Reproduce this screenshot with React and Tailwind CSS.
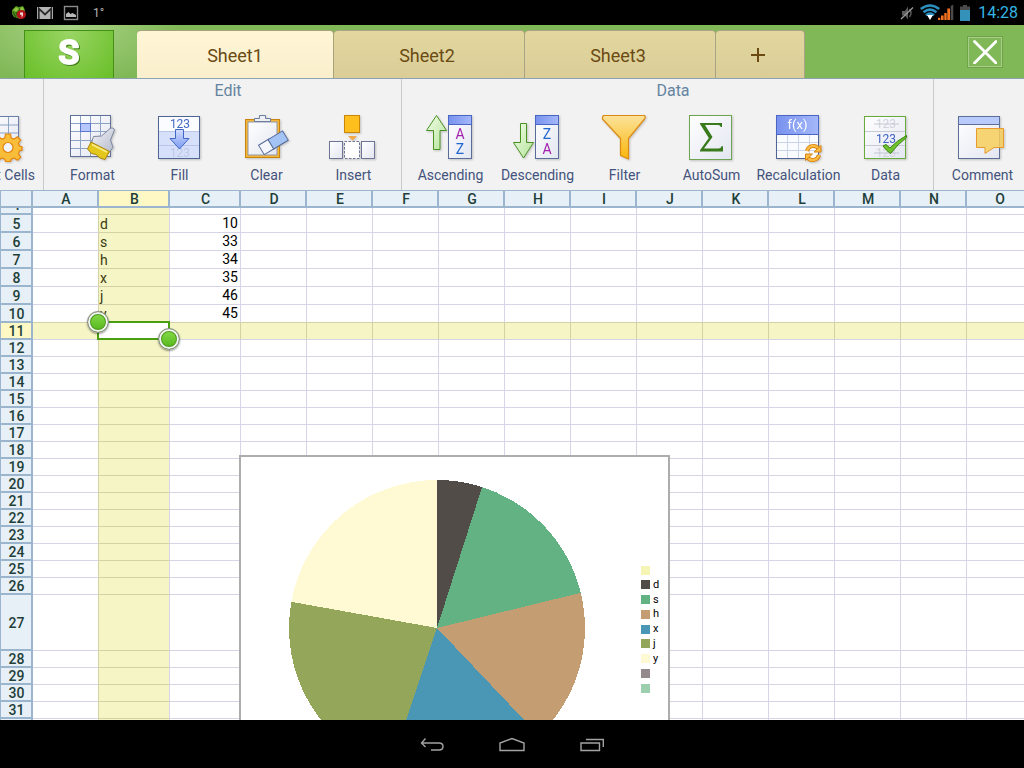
import React from "react";

/* ---------- Status bar ---------- */

function StatusBar() {
  return (
    <header className="flex h-[25px] shrink-0 items-center justify-between bg-black pr-1.5 pl-[11px]">
      <div className="flex items-center">
        <svg className="mr-2.5 h-4 w-4" viewBox="0 0 16 16" aria-hidden="true">
          <path d="M1 5 L5 1 L8 2 L12 1 L14 5 L13 10 L9 14 L3 12 L1 9Z" fill="#4d8c1c" />
          <path d="M2 5l3-3 3 2-3 3zM8 3l4-1 1 3-4 1z" fill="#8fc63f" />
          <path d="M2 7l3 5M5 7l2 5M9 3l-3 8" stroke="#24500b" strokeWidth="1" />
          <circle cx="10.3" cy="9.5" r="4.6" fill="#b5161b" />
          <path d="M9 7.4h3v3l-1.4 2.4v-3H9z" fill="#f1dada" />
        </svg>
        <svg className="mr-2.5 h-4 w-4" viewBox="0 0 16 16" aria-hidden="true">
          <rect x="0" y="2" width="16" height="12" fill="#b4b4b4" />
          <path d="M1.800 14V3.500l6.200 6 6.200-6V14" fill="none" stroke="#2b2b2b" strokeWidth="1.800" />
        </svg>
        <svg className="mr-3.5 h-4 w-4" viewBox="0 0 16 16" aria-hidden="true">
          <rect x="1.500" y="1.500" width="13" height="13" fill="none" stroke="#8c8c8c" strokeWidth="1.400" />
          <path d="M3 12V9l2.500-2 2 2 2-1 3.500 2v2z" fill="#b8b8b8" />
        </svg>
        <span className="text-xs text-[#b4b4b4]">1°</span>
      </div>
      <div className="flex items-center">
        <svg className="mr-1.5 h-4 w-[14px]" viewBox="0 0 14 16" aria-hidden="true">
          <path d="M2 6h3l3-4.500v13L5 10.500H2z" fill="#5c5c5c" />
          <path d="M9.500 4q3 4 0 8" fill="none" stroke="#5c5c5c" strokeWidth="1.400" />
          <path d="M1 14L13 2.500" stroke="#9a9a9a" strokeWidth="1.300" />
        </svg>
        <svg className="mr-1.5 h-[17px] w-[34px]" viewBox="0 0 34 17" aria-hidden="true">
          <g fill="none" stroke="#2b8fc0" strokeWidth="2.600">
            <path d="M0.800 5Q10-2 19.200 5" />
            <path d="M3.500 8.300Q10 3 16.500 8.300" />
            <path d="M6 11.300Q10 7.800 14 11.300" />
          </g>
          <path d="M7 11h6L10 16z" fill="#fff" />
          <path d="M18 16v-2.200h2.300V16zM21 16v-4.500h2.600V16zM24.300 16V9h2.400v7zM27.300 16V4.500h2.700V16z" fill="#f47321" />
          <path d="M30.700 16V2l2.600-1.500V16z" fill="#4a4a4a" />
        </svg>
        <svg className="mr-2 h-4 w-2.5" viewBox="0 0 10 16" aria-hidden="true">
          <path d="M3 0h4v1.500h3V6H0V1.500h3z" fill="#4a4a4a" />
          <rect y="5" width="10" height="11" fill="#3492ba" />
        </svg>
        <time className="text-base leading-6 text-[#33b5e5]">14:28</time>
      </div>
    </header>
  );
}

/* ---------- Sheet tabs ---------- */

function SheetTab({ label, active }) {
  return (
    <button
      type="button"
      role="tab"
      aria-selected={active}
      className={
        active
          ? "w-[197px] rounded-t-sm border-t border-r border-[#a9a27a] bg-linear-to-b from-[#fff6d6] to-[#f9efcd] pt-0.5 text-lg text-[#6b4a14]"
          : "w-[191px] rounded-t-sm border-t border-r border-[#aba385] bg-linear-to-b from-[#e3d79f] to-[#dacd98] pt-0.5 pr-1 text-lg text-[#6b4a14]"
      }
    >
      {label}
    </button>
  );
}

function TabBar() {
  return (
    <div className="flex h-[54px] shrink-0 items-end border-b border-[#8ba3b3] bg-[#81b857] bg-[radial-gradient(ellipse_110px_60px_at_70px_0px,#a9d385,transparent)] pt-[5px]">
      <button
        type="button"
        aria-label="Menu"
        className="ml-6 flex h-full w-[90px] items-center justify-center border border-b-0 border-[#46901a] bg-[radial-gradient(ellipse_at_top,#9ad565,#69bf28)]"
      >
        <svg className="mb-1.5 h-8 w-8 overflow-visible drop-shadow-[1px_1px_0_#3f7d17]" viewBox="0 0 32 32">
          <text
            x="16"
            y="28"
            textAnchor="middle"
            fontSize="34"
            fontWeight="600"
            fill="#fff"
            stroke="#fff"
            strokeWidth="2"
            strokeLinejoin="round"
          >
            S
          </text>
        </svg>
      </button>
      <div role="tablist" className="ml-[23px] flex h-full">
        <SheetTab label="Sheet1" active />
        <SheetTab label="Sheet2" active={false} />
        <SheetTab label="Sheet3" active={false} />
        <button
          type="button"
          aria-label="Add sheet"
          className="flex w-[89px] items-center justify-center rounded-t-sm border-t border-r border-[#aba385] bg-linear-to-b from-[#e3d79f] to-[#dacd98]"
        >
          <svg className="mr-1 h-4 w-4" viewBox="0 0 16 16" aria-hidden="true">
            <path d="M8 1v14M1 8h14" stroke="#6b4a14" strokeWidth="2" />
          </svg>
        </button>
      </div>
      <button
        type="button"
        aria-label="Close"
        className="mr-[22px] mb-[11px] ml-auto flex h-[30px] w-[34px] items-center justify-center border border-[#a9ce8b] shadow-[0_0_0_1px_#6fa348]"
      >
        <svg className="h-6 w-6" viewBox="0 0 24 24" aria-hidden="true">
          <path d="M1.500 1.500l21.500 21.500M23 1.500L1.500 23" stroke="#fff" strokeWidth="2.800" strokeLinecap="round" />
        </svg>
      </button>
    </div>
  );
}

/* ---------- Ribbon icons (47 x 48 artboard) ---------- */

function Defs() {
  return (
    <svg className="absolute h-0 w-0" aria-hidden="true">
      <defs>
        <linearGradient id="paper" x1="0" y1="0" x2="1" y2="1">
          <stop offset="0" stopColor="#ffffff" />
          <stop offset="1" stopColor="#e3e6f1" />
        </linearGradient>
        <linearGradient id="blue" x1="0" y1="0" x2="1" y2="0">
          <stop offset="0" stopColor="#7892ee" />
          <stop offset="1" stopColor="#a5b8fa" />
        </linearGradient>
        <linearGradient id="gold" x1="0" y1="0" x2="0" y2="1">
          <stop offset="0" stopColor="#fbe29a" />
          <stop offset="1" stopColor="#fbb70c" />
        </linearGradient>
        <linearGradient id="leaf" x1="0" y1="0" x2="1" y2="1">
          <stop offset="0" stopColor="#f2fde8" />
          <stop offset="1" stopColor="#b4e39a" />
        </linearGradient>
        <linearGradient id="arrow" x1="0" y1="0" x2="0" y2="1">
          <stop offset="0" stopColor="#d3deff" />
          <stop offset="1" stopColor="#7b9bf0" />
        </linearGradient>
        <linearGradient id="steel" x1="0" y1="0" x2="1" y2="1">
          <stop offset="0" stopColor="#f4f5fa" />
          <stop offset="1" stopColor="#b3b9c9" />
        </linearGradient>
      </defs>
    </svg>
  );
}

const iconArt = {
  cells: (
    <>
      <rect x="5.500" y="3.500" width="41" height="41" fill="url(#paper)" stroke="#6a7fa8" />
      <path d="M16.500 4v40M26.500 4v40M36.500 4v40M6 12h40M6 20h40M6 28h40M6 36h40" stroke="#8da3c4" />
      <g fill="#f9bd3a" stroke="#e3850f" strokeWidth="1.200">
        <path d="M33.500 21h5l.8 4 2.700 1.100 3.500-2.300 3.200 3.300-2.300 3.400 1.100 2.600 2.500.6v3.600l-2.500.7-1.100 2.600 2.300 3.500-3.200 3.200-3.500-2.300-2.700 1.100-.8 2.400h-5l-.8-2.400-2.700-1.100-3.500 2.300-3.200-3.200 2.300-3.500-1.100-2.600-2.500-.7v-3.600l2.500-.6 1.100-2.600-2.300-3.400 3.200-3.300 3.500 2.300 2.700-1.100z" />
        <circle cx="36" cy="34.500" r="5" fill="#f1f4fa" />
      </g>
    </>
  ),
  format: (
    <>
      <rect x="1.500" y="2.500" width="40" height="41" fill="url(#paper)" stroke="#5f7099" />
      <path d="M11.500 3v40M21.500 3v40M31.500 3v40M2 10.500h39M2 18.500h39M2 27.500h39M2 35.500h39" stroke="#8da3c4" />
      <rect x="11.500" y="10.500" width="10" height="8" fill="#b6c8fb" stroke="#5c77d0" />
      <path d="M41 15.500q3.500-1.500 4.500 1.500L41.500 27l2.500 7.500-4 5L22.500 29.500l2-6 8-.5z" fill="url(#steel)" stroke="#7b859f" strokeLinejoin="round" />
      <path d="M22 29l18.500 9.500-4.500 8-5-1.500-4-3.500-4.500-1-4-4.500z" fill="#e3c71c" stroke="#a98309" strokeLinejoin="round" />
      <path d="M23 31.500l15 7.500" stroke="#f8ec87" strokeWidth="1.800" />
    </>
  ),
  fill: (
    <>
      <rect x="2.500" y="3.500" width="41" height="42" fill="#d6e0fa" stroke="#4f6595" />
      <rect x="3" y="4" width="40" height="14" fill="#fbfcff" />
      <path d="M3 18.500h40M3 32.500h40" stroke="#b9c6ea" />
      <text x="24" y="15" textAnchor="middle" fontSize="12" fill="#4468c4">123</text>
      <text x="24" y="44" textAnchor="middle" fontSize="12" fill="#bdc9e6">123</text>
      <path d="M19.500 16.500h8v9H33L23.500 36 14 25.500h5.500z" fill="url(#arrow)" stroke="#4267c6" />
    </>
  ),
  clear: (
    <>
      <rect x="2.500" y="6.500" width="34" height="38" fill="#f5b538" stroke="#c8840e" />
      <rect x="5" y="9" width="29" height="33" fill="url(#paper)" stroke="#9199ac" />
      <path d="M11.500 8.500v-3h5v-3h6v3h5v3z" fill="#eef0f6" stroke="#6d7d9e" />
      <g transform="rotate(-31 30 30)" stroke="#566c99">
        <rect x="16.500" y="24.500" width="12" height="11" fill="#f5f7fd" />
        <rect x="27.500" y="24.500" width="17" height="11" fill="#a4c3f5" />
      </g>
    </>
  ),
  insert: (
    <>
      <rect x="14.500" y="2.500" width="15" height="17" fill="#fcbf1e" stroke="#cd8708" />
      <path d="M18 23h9l-4.500 4.500z" fill="#f3a94b" />
      <rect x="-0.500" y="28.500" width="13" height="17" fill="url(#paper)" stroke="#6d7697" />
      <rect x="14.500" y="28.500" width="15" height="17" fill="#fff" stroke="#6d7697" strokeDasharray="2.500 1.500" />
      <rect x="31.500" y="28.500" width="13" height="17" fill="url(#paper)" stroke="#6d7697" />
    </>
  ),
  ascending: (
    <>
      <path d="M9.500 2.500l10 15h-6.500v19H6.500v-19H-.5z" fill="url(#leaf)" stroke="#4b9224" />
      <rect x="21.500" y="2.500" width="23" height="43" fill="url(#paper)" stroke="#596c9a" />
      <rect x="21.500" y="2.500" width="23" height="9" fill="url(#blue)" stroke="#4a66c4" />
      <text x="33" y="26" textAnchor="middle" fontSize="14" fill="#a31fae">A</text>
      <text x="33" y="41" textAnchor="middle" fontSize="14" fill="#2066cf">Z</text>
    </>
  ),
  descending: (
    <>
      <path d="M6.500 10.500h6v19h7L9.500 45l-10-15.500h7z" fill="url(#leaf)" stroke="#4b9224" />
      <rect x="21.500" y="2.500" width="23" height="43" fill="url(#paper)" stroke="#596c9a" />
      <rect x="21.500" y="2.500" width="23" height="9" fill="url(#blue)" stroke="#4a66c4" />
      <text x="33" y="26" textAnchor="middle" fontSize="14" fill="#2066cf">Z</text>
      <text x="33" y="41" textAnchor="middle" fontSize="14" fill="#a31fae">A</text>
    </>
  ),
  filter: (
    <path
      d="M2.500 2.500h41q1.500 1.500 0 3.500L27.500 25.500V46l-8-3.500v-17L1.500 6q-.5-2 1-3.500z"
      fill="url(#gold)"
      stroke="#dc8b14"
      strokeWidth="1.200"
      strokeLinejoin="round"
    />
  ),
  autosum: (
    <>
      <rect x="1.500" y="2.500" width="42" height="44" fill="url(#paper)" stroke="#6fa552" />
      <path
        d="M12 10h22v4h-1.200q-.5-2-2.800-2H17l7.500 12-8.500 11.500h14.500q2.500 0 3-2.300H35V38.500H12v-1.200L20.800 25 12 11z"
        fill="#397a1c"
      />
    </>
  ),
  recalculation: (
    <>
      <rect x="1.500" y="2.500" width="42" height="43" fill="#fafbff" stroke="#4f6595" />
      <path d="M12.500 22v23M23.500 22v23M34.500 22v23M2 29.500h41M2 37.500h41" stroke="#cbd5ea" />
      <rect x="1.500" y="2.500" width="42" height="19" fill="url(#blue)" stroke="#4a66c4" />
      <text x="22.500" y="16" textAnchor="middle" fontSize="13" fill="#fff">f(x)</text>
      <g fill="none" strokeLinecap="butt">
        <path d="M32 38a6.500 6.500 0 0 1 11.500-2.500M44 42a6.500 6.500 0 0 1-11.500 2.500" stroke="#d9820d" strokeWidth="4" />
        <path d="M32 38a6.500 6.500 0 0 1 11.500-2.500M44 42a6.500 6.500 0 0 1-11.500 2.500" stroke="#fbbd45" strokeWidth="2.200" />
      </g>
      <path d="M46 32.500v6.500h-7zM30.500 47.500V41h7z" fill="#fbbd45" stroke="#d9820d" />
    </>
  ),
  data: (
    <>
      <rect x="2.500" y="3.500" width="41" height="42" fill="url(#paper)" stroke="#68ab3b" />
      <path d="M3 18.500h40M3 32.500h40" stroke="#c7cbd6" />
      <text x="24" y="15" textAnchor="middle" fontSize="12" fill="#d0d3dc">123</text>
      <text x="24" y="30" textAnchor="middle" fontSize="12" fill="#3f62c4">123</text>
      <text x="24" y="44" textAnchor="middle" fontSize="12" fill="#d0d3dc">123</text>
      <path d="M12 11h25M12 40h25" stroke="#c3c7d3" />
      <path d="M21 33l3-1.500 4 3.500q7-7.500 16.500-12.500v2Q36 31 28.500 40.500q-4-2.500-7.500-7.500z" fill="#6fc22f" stroke="#37800f" />
    </>
  ),
  comment: (
    <>
      <rect x="-0.500" y="3.500" width="41" height="42" fill="url(#paper)" stroke="#5d6f99" />
      <rect x="-0.500" y="3.500" width="41" height="8" fill="#b9cafc" stroke="#5d6f99" />
      <path d="M17.500 15.500h27v19H35L26 40.500v-6h-8.500z" fill="#f8cf5c" fillOpacity="0.850" stroke="#e79b2c" />
    </>
  ),
};

function Tool({ icon, label }) {
  return (
    <button type="button" className="flex w-[87px] shrink-0 flex-col items-center gap-1 text-sm leading-5 whitespace-nowrap text-[#44537d]">
      <svg className="h-12 w-[47px] overflow-visible drop-shadow-[1px_1px_1px_#0003]" viewBox="0 0 47 48" aria-hidden="true">
        {iconArt[icon]}
      </svg>
      {label}
    </button>
  );
}

function Group({ title, tools }) {
  return (
    <section className="shrink-0 border-l border-[#c6caca] pr-1 pl-[5px]">
      <h2 className="h-[34px] pl-2.5 text-center text-base leading-6 text-[#6484a0]">{title}</h2>
      <div className="flex">
        {tools.map(([icon, label]) => (
          <Tool key={icon} icon={icon} label={label} />
        ))}
      </div>
    </section>
  );
}

function Ribbon() {
  return (
    <div className="flex h-[111px] shrink-0 overflow-hidden bg-[#f2f2f2]">
      <div className="flex w-[43px] shrink-0 justify-end overflow-hidden pt-[34px] pr-1">
        <Tool icon="cells" label="Format Cells" />
      </div>
      <Group
        title="Edit"
        tools={[["format", "Format"], ["fill", "Fill"], ["clear", "Clear"], ["insert", "Insert"]]}
      />
      <Group
        title="Data"
        tools={[
          ["ascending", "Ascending"],
          ["descending", "Descending"],
          ["filter", "Filter"],
          ["autosum", "AutoSum"],
          ["recalculation", "Recalculation"],
          ["data", "Data"],
        ]}
      />
      <Group title="" tools={[["comment", "Comment"]]} />
    </div>
  );
}

/* ---------- Spreadsheet ---------- */

const columns = "ABCDEFGHIJKLMNOPQRSTUVWXYZ".split("");
const cellData = {
  5: ["d", 10],
  6: ["s", 33],
  7: ["h", 34],
  8: ["x", 35],
  9: ["j", 46],
  10: ["y", 45],
};
const rows = Array.from({ length: 57 }, (_, i) => i + 4);

/* Columns past O and rows past 32 appear only in windows with room for them. */
function columnVisibility(col) {
  return col > "O" ? "hidden min-[1034px]:table-cell" : "";
}

function rowStyle(n) {
  if (n === 4) return "h-[7px]";
  if (n === 27) return "h-14";
  if (n > 32) return "hidden h-[17px] [@media(min-height:784px)]:table-row";
  return n < 11 ? "h-[18px]" : "h-[17px]";
}

function cellTone(n, col) {
  const lit = n === 11 || col === "B";
  const bottom = n === 10 || col === "B" ? "border-b-[#d3d2a6]" : "border-b-[#d6d4e6]";
  const right = col === "A" || n === 11 ? "border-r-[#d3d2a6]" : "border-r-[#d6d4e6]";
  return `${lit ? "bg-[#f6f5c5]" : "bg-white"} ${bottom} ${right}`;
}

function Handle({ place }) {
  return (
    <span
      className={`absolute ${place} h-[22px] w-[22px] rounded-full border border-[#8b8b8b] bg-linear-to-b from-[#8ade4b] to-[#4fb313] shadow-[inset_0_0_0_2px_#f4f4f4,inset_0_0_0_3px_#4d9a20,0_1px_2px_#0006]`}
    />
  );
}

function Cell({ n, col }) {
  const selected = n === 11 && col === "B";
  const values = cellData[n];
  return (
    <td
      className={`border-r border-b p-0 text-sm leading-4 ${columnVisibility(col)} ${cellTone(n, col)} ${
        col === "C" ? "pr-0.5 text-right align-top text-black" : "pl-px text-left align-bottom text-[#3b3b12]"
      } ${selected ? "relative" : ""}`}
    >
      {values && col === "B" && values[0]}
      {values && col === "C" && values[1]}
      {selected && (
        <div className="absolute -top-0.5 -right-px -bottom-px -left-0.5 z-10 border-2 border-[#4a9e12] bg-white">
          <Handle place="-top-3 -left-3" />
          <Handle place="-right-3 -bottom-3" />
        </div>
      )}
    </td>
  );
}

function Grid() {
  return (
    <table className="w-max table-fixed border-separate border-spacing-0">
      <thead>
        <tr className="h-[18px]">
          <td className="w-[33px] border-t border-r-2 border-b-2 border-l border-[#9bb5cf] bg-[#e7eff7] p-0" />
          {columns.map((c) => (
            <th
              key={c}
              scope="col"
              className={`h-[18px] border-t border-r-2 border-b-2 border-[#9bb5cf] p-0 pt-px pl-0.5 text-sm leading-[14px] font-medium text-[#1e4038] ${columnVisibility(c)} ${
                c === "B" ? "bg-[#fef9c4]" : "bg-[#e7eff7]"
              } ${c === "B" || c === "C" ? "w-[71px] min-w-[71px]" : "w-[66px] min-w-[66px]"}`}
            >
              {c}
            </th>
          ))}
        </tr>
      </thead>
      <tbody>
        {rows.map((n) => (
          <tr key={n} className={rowStyle(n)}>
            <th
              scope="row"
              className={`w-[33px] min-w-[33px] border-r-2 border-b-2 border-l border-[#9bb5cf] p-0 text-sm font-medium text-[#1e4038] ${
                n === 11 ? "bg-[#fef9c4]" : "bg-[#e7eff7]"
              } ${n === 4 ? "leading-[15px]" : "pt-px pl-px leading-[14px]"}`}
            >
              {n === 4 ? <span className="flex h-[5px] items-end justify-center overflow-hidden">4</span> : n}
            </th>
            {columns.map((c) => (
              <Cell key={c} n={n} col={c} />
            ))}
          </tr>
        ))}
      </tbody>
    </table>
  );
}

/* ---------- Pie chart ---------- */

const slices = [
  [10, "#524c49"],
  [33, "#63b283"],
  [34, "#c59d72"],
  [35, "#4a96b5"],
  [46, "#94a65a"],
  [45, "#fffad3"],
];
const legend = [
  ["", "bg-[#f6f5b5]"],
  ["d", "bg-[#524c49]"],
  ["s", "bg-[#63b283]"],
  ["h", "bg-[#c59d72]"],
  ["x", "bg-[#4a96b5]"],
  ["j", "bg-[#94a65a]"],
  ["y", "bg-[#fffad3]"],
  ["", "bg-[#948a8c]"],
  ["", "bg-[#9ccfae]"],
];

function slicePaths() {
  const total = slices.reduce((sum, [v]) => sum + v, 0);
  let start = 0;
  return slices.map(([value, color]) => {
    const end = start + (value / total) * Math.PI * 2;
    const point = (a) => `${148 + 148 * Math.sin(a)} ${148 - 148 * Math.cos(a)}`;
    const d = `M148 148L${point(start)}A148 148 0 0 1 ${point(end)}Z`;
    start = end;
    return { d, color };
  });
}

function PieChart() {
  return (
    <figure className="absolute top-[265px] left-[239px] z-20 flex h-[346px] w-[431px] items-center border-2 border-[#adadad] bg-white pl-12">
      <svg className="h-[296px] w-[296px]" viewBox="0 0 296 296" shapeRendering="crispEdges" role="img" aria-label="Pie chart">
        {slicePaths().map(({ d, color }) => (
          <path key={color} d={d} fill={color} />
        ))}
      </svg>
      <ul className="ml-14 flex h-[132px] translate-y-px flex-col justify-between">
        {legend.map(([name, color]) => (
          <li key={color} className="flex h-3.5 items-center gap-[3px] text-[11px] leading-3.5 text-black">
            <span className={`h-[9px] w-[9px] ${color}`} />
            {name}
          </li>
        ))}
      </ul>
    </figure>
  );
}

/* ---------- Navigation bar ---------- */

function NavBar() {
  return (
    <nav className="flex h-12 shrink-0 items-center justify-center bg-black pt-0.5">
      <button type="button" aria-label="Back" className="flex h-full w-20 items-center justify-center">
        <svg className="h-4 w-6" viewBox="0 0 24 16" fill="none" stroke="#a3a3a3" strokeWidth="1.400" aria-hidden="true">
          <path d="M5.500 1.500L1.500 6l4 4M1.500 6H19q4 0 4 3.500T19 13h-8" />
        </svg>
      </button>
      <button type="button" aria-label="Home" className="flex h-full w-20 items-center justify-center">
        <svg className="h-4 w-[26px]" viewBox="0 0 26 16" fill="none" stroke="#a3a3a3" strokeWidth="1.400" aria-hidden="true">
          <path d="M1 13.500V6l12-4.500L25 6v7.500z" />
        </svg>
      </button>
      <button type="button" aria-label="Recent apps" className="flex h-full w-20 items-center justify-center">
        <svg className="h-4 w-6" viewBox="0 0 24 16" fill="none" stroke="#a3a3a3" strokeWidth="1.400" aria-hidden="true">
          <path d="M1 6h18.500v7.500H1zM6 2.500h17.300V10" />
        </svg>
      </button>
    </nav>
  );
}

export default function App() {
  return (
    <div className="flex h-screen flex-col overflow-hidden bg-black font-[Roboto,sans-serif]">
      <Defs />
      <StatusBar />
      <TabBar />
      <Ribbon />
      <main className="relative min-h-0 flex-1 overflow-hidden bg-white">
        <Grid />
        <PieChart />
      </main>
      <NavBar />
    </div>
  );
}
